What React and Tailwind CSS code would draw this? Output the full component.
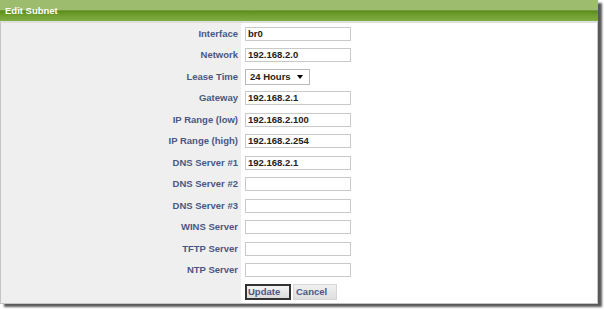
import React from 'react';

const rows = [
  { label: 'Interface', value: 'br0' },
  { label: 'Network', value: '192.168.2.0' },
  { label: 'Lease Time', select: '24 Hours' },
  { label: 'Gateway', value: '192.168.2.1' },
  { label: 'IP Range (low)', value: '192.168.2.100' },
  { label: 'IP Range (high)', value: '192.168.2.254' },
  { label: 'DNS Server #1', value: '192.168.2.1' },
  { label: 'DNS Server #2', value: '' },
  { label: 'DNS Server #3', value: '' },
  { label: 'WINS Server', value: '' },
  { label: 'TFTP Server', value: '' },
  { label: 'NTP Server', value: '' },
];

function Row({ label, children }) {
  return (
    <div className="flex h-[21.5px]">
      <div className="w-[240px] shrink-0 bg-[#efefef] flex items-center justify-end pr-[3px] font-bold text-[#4a5785]">
        {label}
      </div>
      <div className="flex-1 bg-white flex items-center pl-[4px]">{children}</div>
    </div>
  );
}

export default function App() {
  return (
    <div className="w-[604px] h-[310px] bg-white overflow-hidden text-[9.5px] font-['Liberation_Sans',Arial,sans-serif]">
      <div className="w-[598px] h-[304px] flex flex-col shadow-[4px_3px_2px_rgba(0,0,0,0.65)]">
        {/* header */}
        <div className="h-[21px] shrink-0 flex items-center pl-[5px] bg-[linear-gradient(to_bottom,#9dbc6e_0%,#9dbc6e_46%,#5c8c1c_52%,#6e9d2e_70%,#80ad44_100%)]">
          <span className="text-white font-bold text-[9.5px] pt-[1px]">Edit Subnet</span>
        </div>
        <div className="flex-1 flex flex-col border-l border-r border-b border-[#c4c4c4] border-t-2 border-t-[#dedede]">
          {rows.map(r => (
            <Row key={r.label} label={r.label}>
              {r.select ? (
                <div className="w-[65px] h-[16px] border border-[#b9b9b9] bg-white flex items-center justify-between pl-[4px] pr-[6px] font-bold text-[#222]">
                  <span>{r.select}</span>
                  <span className="w-0 h-0 border-l-[3.5px] border-r-[3.5px] border-t-[4px] border-l-transparent border-r-transparent border-t-black" />
                </div>
              ) : (
                <input
                  readOnly
                  value={r.value}
                  className="w-[106px] h-[14px] border border-[#c9c9c9] bg-white px-[2px] font-bold text-[#222] text-[9.5px] outline-none"
                />
              )}
            </Row>
          ))}
          <Row label="">
            <div className="flex gap-[2px] items-center">
              <button className="w-[46px] h-[16px] border-2 border-[#333] bg-[linear-gradient(to_bottom,#f4f4f4,#dcdcdc)] font-bold text-[#4a5785] text-left pl-[1px] leading-none">
                Update
              </button>
              <button className="w-[44px] h-[16px] border border-[#d6d6d6] bg-[linear-gradient(to_bottom,#f0f0f0,#dedede)] font-bold text-[#4a5785] text-left pl-[2px] leading-none">
                Cancel
              </button>
            </div>
          </Row>
        </div>
      </div>
    </div>
  );
}
